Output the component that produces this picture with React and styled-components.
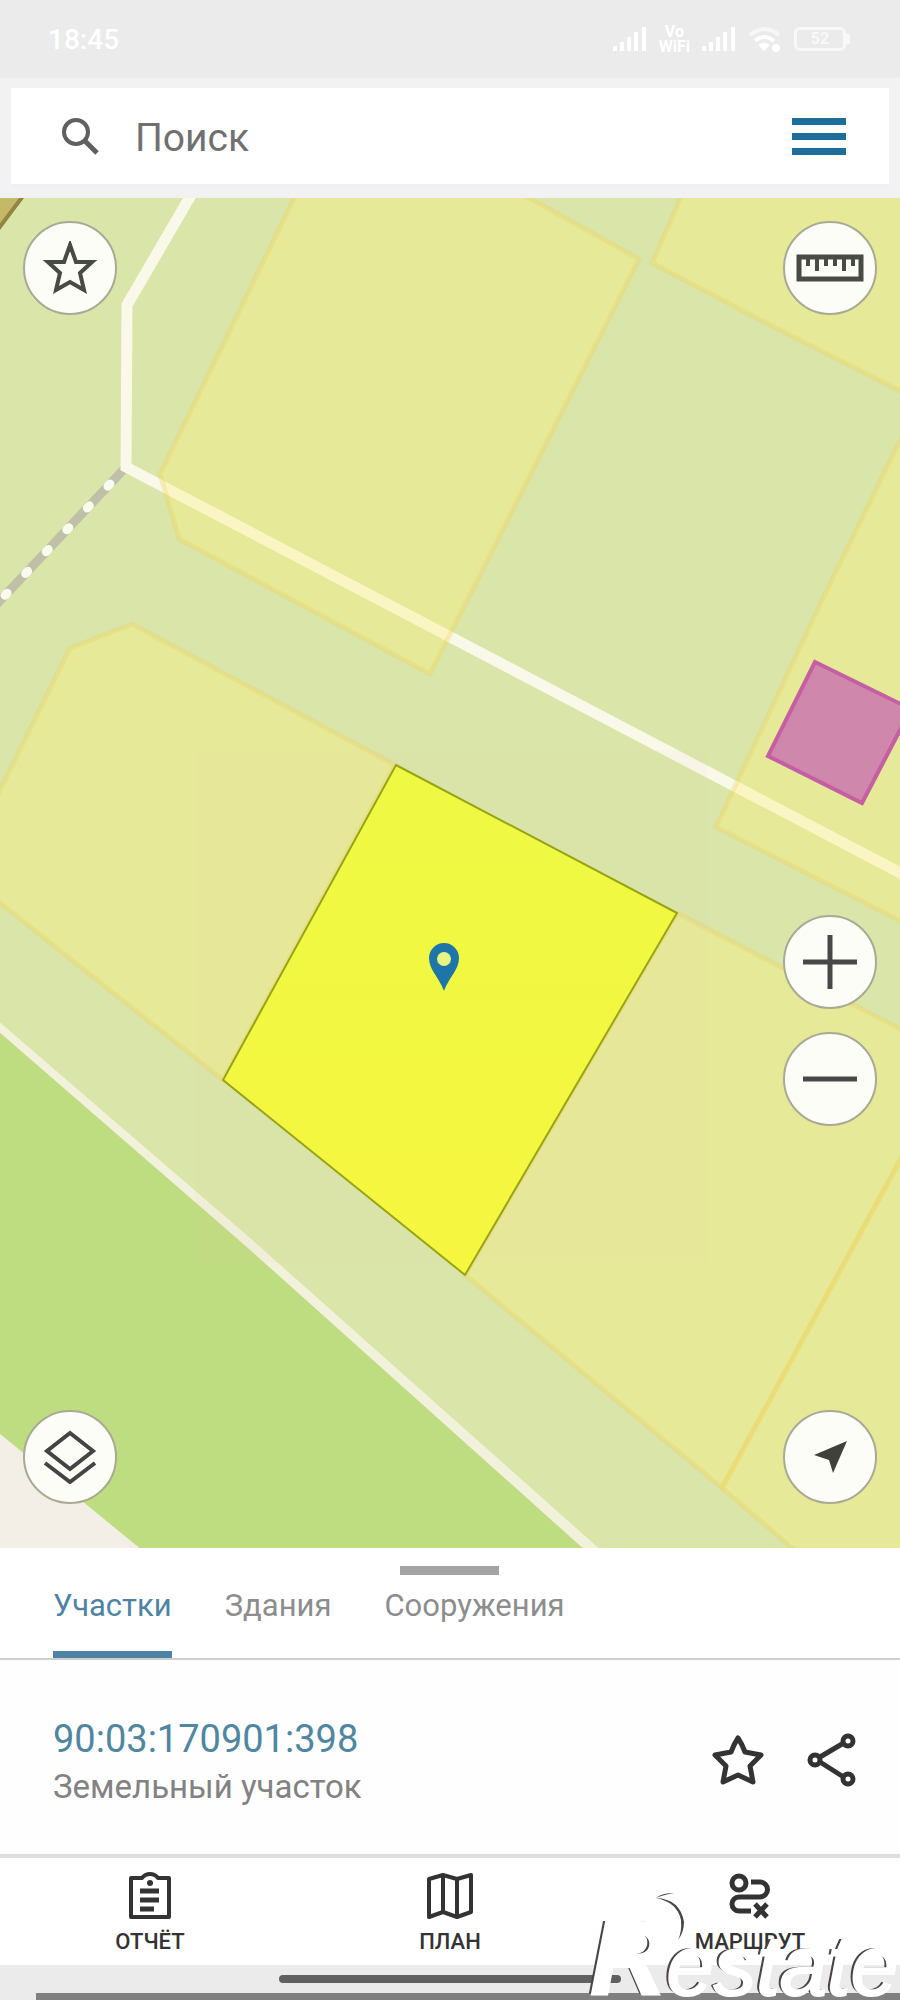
import React, { useState } from 'react';
import styled, { createGlobalStyle } from 'styled-components';

const GlobalStyle = createGlobalStyle`
	* {
		box-sizing: border-box;
	}
	body {
		margin: 0;
		background: #ebebeb;
		font-family: Roboto, "Noto Sans", sans-serif;
	}
	button {
		padding: 0;
		border: none;
		background: none;
		font-family: inherit;
		cursor: pointer;
	}
	svg {
		display: block;
	}
`;

const Layout = styled.div`
	position: relative;
	display: flex;
	flex-direction: column;
	overflow: hidden;
`;

const StatusBar = styled.div`
	display: flex;
	align-items: center;
	justify-content: space-between;
	height: 78px;
	padding: 0 54px 0 48px;
	background: #ebebeb;
	color: #fff;
`;
const Clock = styled.span`
	font-size: 28px;
	font-weight: 500;
`;
const StatusIcons = styled.div`
	display: flex;
	align-items: center;
	gap: 12px;
`;
const VoWifi = styled.span`
	display: flex;
	flex-direction: column;
	align-items: center;
	font-size: 16px;
	font-weight: 700;
	line-height: 15px;
`;
const Battery = styled.span`
	position: relative;
	width: 52px;
	height: 24px;
	border: 3px solid #f8f8f8;
	border-radius: 6px;
	color: #f8f8f8;
	font-size: 16px;
	font-weight: 700;
	line-height: 18px;
	text-align: center;
	&::after {
		content: "";
		position: absolute;
		top: 4px;
		right: -7px;
		width: 4px;
		height: 10px;
		background: #f8f8f8;
	}
`;

const Header = styled.header`
	padding: 10px 11px;
	background: #f1f2f1;
`;
const SearchBar = styled.form`
	display: flex;
	align-items: center;
	height: 100px;
	padding: 0 43px 0 50px;
	background: #fff;
	border-bottom: 4px solid #f0f0f4;
`;
const SearchInput = styled.input`
	flex: 1;
	min-width: 0;
	margin-left: 36px;
	padding: 4px 0 0;
	border: none;
	outline: none;
	background: transparent;
	color: #666;
	font-family: inherit;
	font-size: 39px;
	&::placeholder {
		color: #707070;
		opacity: 1;
	}
`;
const MenuButton = styled.button`
	display: flex;
	flex-direction: column;
	gap: 8px;
	width: 54px;
`;
const MenuLine = styled.span`
	height: 7px;
	background: #1d6f99;
`;

const MapBox = styled.main`
	position: relative;
	background: #dae6a9;
`;
const MapDrawing = styled.svg`
	width: 100%;
	height: auto;
`;
const MapControls = styled.div`
	position: absolute;
	display: flex;
	flex-direction: column;
	gap: 23px;
	${props => props.$side}: 23px;
	${props => props.$from}: ${props => props.$offset}px;
`;
const RoundButton = styled.button`
	display: flex;
	align-items: center;
	justify-content: center;
	width: 94px;
	height: 94px;
	border: 2px solid #a9aa94;
	border-radius: 50%;
	background: #fdfdf8;
`;

const TabBar = styled.nav`
	position: relative;
	display: flex;
	gap: 53px;
	height: 112px;
	padding: 0 53px;
	background: #fff;
	border-bottom: 2px solid #cfcfcf;
`;
const DragHandle = styled.span`
	position: absolute;
	top: 18px;
	left: 50%;
	width: 99px;
	height: 9px;
	margin-left: -50px;
	background: #a4a4a4;
`;
const Tab = styled.button`
	padding-top: 11px;
	border-bottom: 7px solid ${props => (props.$active ? '#4f83a3' : 'transparent')};
	color: ${props => (props.$active ? '#4f83a3' : '#8d8d8d')};
	font-size: 31px;
`;

const ParcelRow = styled.section`
	display: flex;
	align-items: center;
	justify-content: space-between;
	height: 198px;
	padding: 6px 42px 0 53px;
	background: #fefefe;
	border-bottom: 4px solid #dedede;
`;
const ParcelInfo = styled.div`
	display: flex;
	flex-direction: column;
	padding-top: 6px;
`;
const ParcelNumber = styled.a`
	color: #4f86a0;
	font-size: 38px;
	line-height: 48px;
	text-decoration: none;
`;
const ParcelKind = styled.span`
	color: #828282;
	font-size: 33px;
	line-height: 48px;
`;
const ParcelActions = styled.div`
	display: flex;
	align-items: center;
	gap: 42px;
`;

const BottomNav = styled.nav`
	display: grid;
	grid-template-columns: repeat(3, 1fr);
	height: 107px;
	background: #fff;
`;
const NavButton = styled.button`
	display: flex;
	flex-direction: column;
	align-items: center;
	gap: 9px;
	padding-top: 14px;
	color: #333;
	font-size: 22px;
	font-weight: 500;
	line-height: 26px;
`;

const SystemBar = styled.div`
	display: flex;
	flex-direction: column;
	justify-content: space-between;
	height: 35px;
	padding-top: 10px;
	background: #ebebeb;
`;
const HomePill = styled.span`
	align-self: center;
	width: 38%;
	height: 8px;
	border-radius: 4px;
	background: #606060;
`;
const Stripe = styled.span`
	height: 7px;
	margin-left: 36px;
	background: #808080;
`;

const Watermark = styled.div`
	position: absolute;
	right: 2px;
	bottom: -8px;
	display: flex;
	align-items: baseline;
	color: #fff;
	font-family: "Liberation Sans", Arial, sans-serif;
	font-size: 85px;
	font-style: italic;
	line-height: 84px;
	text-shadow: -3px -1px 0 #4a4444;
	-webkit-text-stroke: 2px #fff;
	pointer-events: none;
`;
const WatermarkInitial = styled.span`
	font-size: 106px;
	font-weight: 700;
`;
const WatermarkArc = styled.svg`
	position: absolute;
	bottom: 62px;
	left: 64px;
	width: 36px;
	height: 56px;
`;

const parcels = [
	'298,190 160,474 179,539 430,674 639,259 515,190',
	'684,190 652,263 770,325 910,396 910,190',
	'910,420 822,600 716,827 910,926',
	'-10,810 70,648 132,624 395,765 223,1080 -10,895',
	'677,913 910,1034 910,1142 722,1488 465,1275',
	'910,1142 910,1560 806,1560 722,1488',
];

const CadastralMap = () => (
	<MapDrawing viewBox="0 198 900 1350" aria-label="Карта">
		<rect y="198" width="900" height="1350" fill="#dae6a9"/>
		<path d="M0 1028 L600 1560 H154 L0 1434 Z" fill="#bedd80"/>
		<path d="M0 1434 L154 1560 H0 Z" fill="#f4efe6"/>
		<path d="M-10 1014 L250 1238 L612 1560 H596 L248 1248 L-10 1024 Z" fill="#f1f1dc"/>
		<path d="M-4 192 H26 L-4 232 Z" fill="#c3b968" stroke="#93853f" strokeWidth="4"/>
		<path d="M126 467 L-6 607" stroke="#bfc0a7" strokeWidth="9"/>
		<path d="M110 484 L-6 607" stroke="#fafbef" strokeWidth="9" strokeLinecap="round" strokeDasharray="3 27"/>
		<path d="M194 190 L127 305 L126 467 L910 878" fill="none" stroke="#f9f8e9" strokeWidth="11"/>
		{parcels.map(points => (
			<polygon key={points} points={points} fill="#ffef74" fillOpacity="0.32" stroke="#f0d058" strokeOpacity="0.3" strokeWidth="5"/>
		))}
		<rect x="195" y="750" width="512" height="513" fill="#e8c8b8" fillOpacity="0.05"/>
		<path d="M815 662 L911 709 L862 803 L768 756 Z" fill="#cf87ac" stroke="#c45fa3" strokeWidth="4"/>
		<linearGradient id="selected" x1="0" y1="0" x2="0" y2="1">
			<stop offset="0" stopColor="#eef943"/>
			<stop offset="1" stopColor="#f6f63f"/>
		</linearGradient>
		<path d="M396 765 L677 913 L465 1275 L223 1080 Z" fill="url(#selected)" stroke="#98a512" strokeWidth="2"/>
		<path d="M444 991 C439 977 429 970 429 958 A15 15 0 0 1 459 958 C459 970 449 977 444 991 Z" fill="#1d75a8"/>
		<circle cx="444" cy="959" r="7" fill="#e7f583"/>
	</MapDrawing>
);

const Signal = () => (
	<svg width="34" height="24" viewBox="0 0 34 24" fill="#fff" aria-hidden="true">
		<path d="M0 19h4v5H0zM7 15h4v9H7zM14 10h4v14h-4zM21 5h4v19h-4zM29 0h4v24h-4z"/>
	</svg>
);

const Wifi = () => (
	<svg width="34" height="27" viewBox="0 0 34 27" fill="none" stroke="#fff" strokeWidth="4" aria-hidden="true">
		<path d="M2 9 Q16 -3 31 9" opacity="0.6"/>
		<path d="M7 15 Q16 7 26 15"/>
		<path d="M11 19 L16 25 L21 19 Q16 15 11 19 Z" fill="#fff" strokeWidth="1"/>
		<circle cx="28" cy="22" r="2"/>
	</svg>
);

const SearchIcon = () => (
	<svg width="38" height="38" viewBox="0 0 38 38" fill="none" stroke="#606060" strokeWidth="4" aria-hidden="true">
		<circle cx="15" cy="15" r="12"/>
		<path d="M23 23 L36 36" strokeWidth="5"/>
	</svg>
);

const SharpStarIcon = () => (
	<svg width="54" height="54" viewBox="0 0 54 54" fill="none" stroke="#484a44" strokeWidth="4" aria-hidden="true">
		<path d="M27 4 L33 21 L49 21 L37 32 L41 49 L27 41 L13 49 L17 32 L5 21 L21 21 Z"/>
	</svg>
);

const RulerIcon = () => (
	<svg width="68" height="28" viewBox="0 0 68 28" fill="none" stroke="#484a44" strokeWidth="4" aria-hidden="true">
		<rect x="3" y="3" width="62" height="22" strokeWidth="5"/>
		<path d="M12 4v8M21 4v13M30 4v8M39 4v8M48 4v13M57 4v8"/>
	</svg>
);

const PlusIcon = () => (
	<svg width="54" height="54" viewBox="0 0 54 54" stroke="#484848" strokeWidth="5" aria-hidden="true">
		<path d="M0 27h54M27 0v54"/>
	</svg>
);

const MinusIcon = () => (
	<svg width="54" height="54" viewBox="0 0 54 54" stroke="#484848" strokeWidth="5" aria-hidden="true">
		<path d="M0 27h54"/>
	</svg>
);

const LayersIcon = () => (
	<svg width="54" height="54" viewBox="0 0 54 54" fill="none" stroke="#444" strokeWidth="4" aria-hidden="true">
		<path d="M27 3 L50 21 L27 39 L4 21 Z"/>
		<path d="M2 33 L27 52 L52 33"/>
	</svg>
);

const LocateIcon = () => (
	<svg width="34" height="34" viewBox="0 0 34 34" fill="#40413c" aria-hidden="true">
		<path d="M34 1 L1 15 L16 20 L20 33 Z"/>
	</svg>
);

const StarIcon = () => (
	<svg width="52" height="52" viewBox="0 0 52 52" fill="none" stroke="#333" strokeWidth="5" strokeLinejoin="round" aria-hidden="true">
		<path d="M26 4 Q30 10 33 18 L49 21 L38 32 L41 48 L26 41 L11 48 L14 32 L3 21 L19 18 Q22 10 26 4 Z"/>
	</svg>
);

const ShareIcon = () => (
	<svg width="52" height="54" viewBox="0 0 52 54" fill="none" stroke="#333" strokeWidth="5" aria-hidden="true">
		<path d="M14 24 L36 11 M14 29 L36 43"/>
		<circle cx="9" cy="27" r="5"/>
		<circle cx="42" cy="8" r="5"/>
		<circle cx="42" cy="46" r="5"/>
	</svg>
);

const ReportIcon = () => (
	<svg width="46" height="48" viewBox="0 0 46 48" fill="none" stroke="#333" strokeWidth="4" strokeLinejoin="round" aria-hidden="true">
		<path d="M4 6 H15 Q18 2 23 2 Q28 2 31 6 H42 V45 H4 Z"/>
		<path d="M13 19h19M13 28h19M13 37h14" strokeWidth="5"/>
		<circle cx="23" cy="11" r="3" fill="#333" stroke="none"/>
	</svg>
);

const PlanIcon = () => (
	<svg width="48" height="48" viewBox="0 0 48 48" fill="none" stroke="#333" strokeWidth="4" strokeLinejoin="round" aria-hidden="true">
		<path d="M3 7 L17 3 L31 7 L45 3 V40 L31 45 L17 40 L3 45 Z"/>
		<path d="M17 3 V40 M31 7 V45"/>
	</svg>
);

const RouteIcon = () => (
	<svg width="42" height="48" viewBox="0 0 42 48" fill="none" stroke="#333" strokeWidth="5" aria-hidden="true">
		<circle cx="10" cy="11" r="7"/>
		<path d="M22 10 H31 A7 7 0 0 1 31 25 H10 A7 7 0 0 0 10 39 H22"/>
		<path d="M26 32 L38 45 M38 32 L26 45"/>
	</svg>
);

const tabs = ['Участки', 'Здания', 'Сооружения'];

const App = () => {
	const [query, setQuery] = useState('');
	const [activeTab, setActiveTab] = useState(tabs[0]);
	const handleQueryChange = (event) => {
		setQuery(event.target.value);
	};
	const handleSubmit = (event) => {
		event.preventDefault();
	};

	return (
		<Layout>
			<GlobalStyle/>
			<StatusBar>
				<Clock>18:45</Clock>
				<StatusIcons>
					<Signal/>
					<VoWifi><span>Vo</span><span>WiFi</span></VoWifi>
					<Signal/>
					<Wifi/>
					<Battery>52</Battery>
				</StatusIcons>
			</StatusBar>
			<Header>
				<SearchBar onSubmit={handleSubmit}>
					<SearchIcon/>
					<SearchInput aria-label="Поиск" placeholder="Поиск" value={query} onChange={handleQueryChange}/>
					<MenuButton type="button" aria-label="Меню">
						<MenuLine/>
						<MenuLine/>
						<MenuLine/>
					</MenuButton>
				</SearchBar>
			</Header>
			<MapBox>
				<CadastralMap/>
				<MapControls $side="left" $from="top" $offset={23}>
					<RoundButton aria-label="Избранное"><SharpStarIcon/></RoundButton>
				</MapControls>
				<MapControls $side="right" $from="top" $offset={23}>
					<RoundButton aria-label="Линейка"><RulerIcon/></RoundButton>
				</MapControls>
				<MapControls $side="right" $from="bottom" $offset={422}>
					<RoundButton aria-label="Приблизить"><PlusIcon/></RoundButton>
					<RoundButton aria-label="Отдалить"><MinusIcon/></RoundButton>
				</MapControls>
				<MapControls $side="left" $from="bottom" $offset={44}>
					<RoundButton aria-label="Слои"><LayersIcon/></RoundButton>
				</MapControls>
				<MapControls $side="right" $from="bottom" $offset={44}>
					<RoundButton aria-label="Моё местоположение"><LocateIcon/></RoundButton>
				</MapControls>
			</MapBox>
			<TabBar>
				<DragHandle/>
				{tabs.map(tab => (
					<Tab key={tab} $active={tab === activeTab} onClick={() => setActiveTab(tab)}>{tab}</Tab>
				))}
			</TabBar>
			<ParcelRow>
				<ParcelInfo>
					<ParcelNumber href="#parcel">90:03:170901:398</ParcelNumber>
					<ParcelKind>Земельный участок</ParcelKind>
				</ParcelInfo>
				<ParcelActions>
					<button aria-label="В избранное"><StarIcon/></button>
					<button aria-label="Поделиться"><ShareIcon/></button>
				</ParcelActions>
			</ParcelRow>
			<BottomNav>
				<NavButton><ReportIcon/>ОТЧЁТ</NavButton>
				<NavButton><PlanIcon/>ПЛАН</NavButton>
				<NavButton><RouteIcon/>МАРШРУТ</NavButton>
			</BottomNav>
			<SystemBar>
				<HomePill/>
				<Stripe/>
			</SystemBar>
			<Watermark>
				<WatermarkInitial>R</WatermarkInitial>
				<span>estate</span>
				<WatermarkArc viewBox="0 0 36 56" fill="#4a4444" aria-hidden="true">
					<path d="M2 8 Q8 3 20 3 Q9 5 2 8 Q26 9 30 32 Q30 42 24 50 Q28 42 27 30 Q23 12 2 8 Z"/>
				</WatermarkArc>
			</Watermark>
		</Layout>
	);
};

export default App;
